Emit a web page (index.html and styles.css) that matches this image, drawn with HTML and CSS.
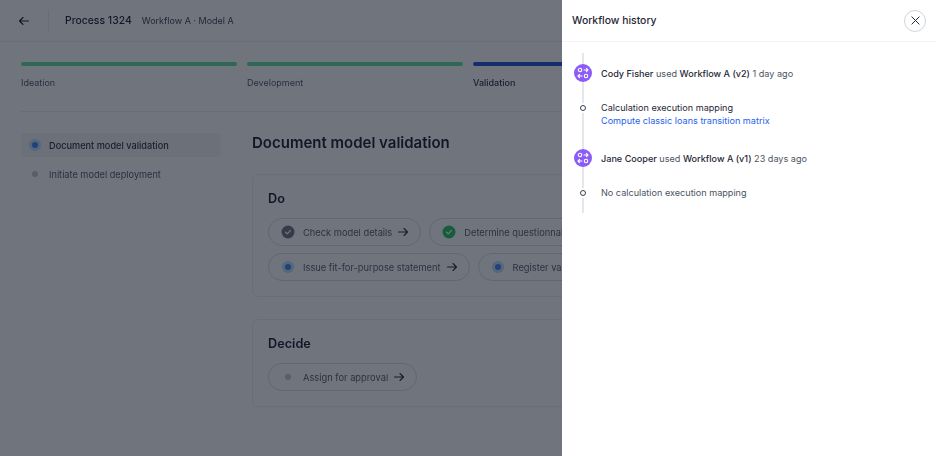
FILE: index.html
```html
<!DOCTYPE html>
<html lang="en">
<head>
<meta charset="utf-8">
<title>Process 1324</title>
<link rel="stylesheet" href="styles.css">
</head>
<body>
<div class="app">
  <div class="page">
    <header class="topbar">
      <button class="back" aria-label="Back">
        <svg width="12" height="12" viewBox="0 0 12 12" fill="none" stroke="currentColor" stroke-width="1.1" stroke-linecap="round" stroke-linejoin="round"><path d="M10.5 6H1.5M5 2.5 1.5 6 5 9.5"/></svg>
      </button>
      <span class="vr"></span>
      <span class="title">Process 1324</span>
      <span class="crumb">Workflow A · Model A</span>
    </header>
    <div class="steps">
      <div class="step"><div class="bar done"></div><span class="step-label">Ideation</span></div>
      <div class="step"><div class="bar done"></div><span class="step-label">Development</span></div>
      <div class="step"><div class="bar current"></div><span class="step-label strong">Validation</span></div>
    </div>
    <div class="columns">
      <nav class="side">
        <a class="side-item active"><span class="status"><i class="halo"></i></span>Document model validation</a>
        <a class="side-item"><span class="status"><i class="pending"></i></span>Initiate model deployment</a>
      </nav>
      <main class="content">
        <h1>Document model validation</h1>
        <section class="card do">
          <h2>Do</h2>
          <div class="chips">
            <div class="chip-row">
              <a class="chip"><svg class="tick" viewBox="0 0 14 14"><circle cx="7" cy="7" r="6.5" fill="#6b7280"/><path d="M4.6 7.2 6.3 8.8 9.4 5.5" fill="none" stroke="#fff" stroke-width="1.2" stroke-linecap="round" stroke-linejoin="round"/></svg>Check model details<svg class="arrow" viewBox="0 0 12 12" fill="none" stroke="currentColor" stroke-width="1.1" stroke-linecap="round" stroke-linejoin="round"><path d="M1.5 6h9M7 2.5 10.5 6 7 9.5"/></svg></a>
              <a class="chip"><svg class="tick" viewBox="0 0 14 14"><circle cx="7" cy="7" r="6.5" fill="#22c55e"/><path d="M4.6 7.2 6.3 8.8 9.4 5.5" fill="none" stroke="#fff" stroke-width="1.2" stroke-linecap="round" stroke-linejoin="round"/></svg>Determine questionnaire outcome<svg class="arrow" viewBox="0 0 12 12" fill="none" stroke="currentColor" stroke-width="1.1" stroke-linecap="round" stroke-linejoin="round"><path d="M1.5 6h9M7 2.5 10.5 6 7 9.5"/></svg></a>
            </div>
            <div class="chip-row">
              <a class="chip"><span class="status"><i class="halo"></i></span>Issue fit-for-purpose statement<svg class="arrow" viewBox="0 0 12 12" fill="none" stroke="currentColor" stroke-width="1.1" stroke-linecap="round" stroke-linejoin="round"><path d="M1.5 6h9M7 2.5 10.5 6 7 9.5"/></svg></a>
              <a class="chip"><span class="status"><i class="halo"></i></span>Register validation results<svg class="arrow" viewBox="0 0 12 12" fill="none" stroke="currentColor" stroke-width="1.1" stroke-linecap="round" stroke-linejoin="round"><path d="M1.5 6h9M7 2.5 10.5 6 7 9.5"/></svg></a>
            </div>
          </div>
        </section>
        <section class="card decide">
          <h2>Decide</h2>
          <div class="chips">
            <div class="chip-row">
              <a class="chip"><span class="status"><i class="pending"></i></span>Assign for approval<svg class="arrow" viewBox="0 0 12 12" fill="none" stroke="currentColor" stroke-width="1.1" stroke-linecap="round" stroke-linejoin="round"><path d="M1.5 6h9M7 2.5 10.5 6 7 9.5"/></svg></a>
            </div>
          </div>
        </section>
      </main>
    </div>
  </div>
  <div class="scrim"></div>
  <aside class="drawer">
    <header class="drawer-head">
      <span class="drawer-title">Workflow history</span>
      <button class="close" aria-label="Close">
        <svg width="9" height="9" viewBox="0 0 10 10" fill="none" stroke="currentColor" stroke-width="1.1" stroke-linecap="round"><path d="M1 1l8 8M9 1 1 9"/></svg>
      </button>
    </header>
    <ol class="timeline">
      <li class="event">
        <span class="badge"><svg width="12" height="12" viewBox="0 0 12 12" fill="none" stroke="#fff" stroke-width="1.1" stroke-linecap="round" stroke-linejoin="round"><circle cx="3" cy="3" r="1.7"/><path d="M7 3h4M9.4 1.4 11 3 9.4 4.6"/><circle cx="9" cy="9" r="1.7"/><path d="M5 9H1M2.6 7.4 1 9l1.6 1.6"/></svg></span>
        <p><b>Cody Fisher</b> used <b>Workflow A (v2)</b> 1 day ago</p>
      </li>
      <li class="detail">
        <span class="node"><i></i></span>
        <div><p class="dark">Calculation execution mapping</p><a class="link">Compute classic loans transition matrix</a></div>
      </li>
      <li class="event">
        <span class="badge"><svg width="12" height="12" viewBox="0 0 12 12" fill="none" stroke="#fff" stroke-width="1.1" stroke-linecap="round" stroke-linejoin="round"><circle cx="3" cy="3" r="1.7"/><path d="M7 3h4M9.4 1.4 11 3 9.4 4.6"/><circle cx="9" cy="9" r="1.7"/><path d="M5 9H1M2.6 7.4 1 9l1.6 1.6"/></svg></span>
        <p><b>Jane Cooper</b> used <b>Workflow A (v1)</b> 23 days ago</p>
      </li>
      <li class="detail last">
        <span class="node"><i></i></span>
        <div><p>No calculation execution mapping</p></div>
      </li>
    </ol>
  </aside>
</div>
</body>
</html>
```

FILE: styles.css
```css
* { box-sizing: border-box; }
html, body { margin: 0; height: 100%; }
body {
  font-family: Inter, "Liberation Sans", sans-serif;
  background: #fff;
  color: #111827;
  overflow: hidden;
}
.app {
  position: relative;
  width: 936px;
  height: 456px;
  overflow: hidden;
  filter: blur(0.5px);
}
.page { width: 936px; height: 456px; overflow: hidden; }
.topbar {
  display: flex;
  align-items: center;
  height: 42px;
  border-bottom: 1px solid #eceef1;
  padding-left: 18px;
}
.back {
  display: flex;
  width: 12px;
  height: 12px;
  padding: 0;
  border: 0;
  background: none;
  color: #111827;
}
.vr { width: 1px; height: 22px; background: #eceef1; margin: 0 16px 0 18px; }
.title { font-size: 10.4px; font-weight: 500; color: #111827; }
.crumb { font-size: 9px; color: #374151; margin-left: 10px; }
.steps {
  display: flex;
  gap: 10px;
  margin: 0 0 0 21px;
  width: 915px;
  height: 70px;
  padding-top: 20px;
  border-bottom: 1px solid #eceef1;
}
.step { width: 216px; flex: none; }
.bar { height: 4px; border-radius: 2px; }
.bar.done { background: #5fe0a0; }
.bar.current { background: #1d4ed8; }
.step-label { display: block; margin-top: 11px; font-size: 9px; line-height: 12px; color: #4b5563; }
.step-label.strong { color: #1f2937; font-weight: 500; }
.columns { display: flex; padding: 21px 0 0 21px; }
.side { width: 200px; flex: none; margin-right: 31px; display: flex; flex-direction: column; gap: 5px; }
.side-item {
  display: flex;
  align-items: center;
  height: 24px;
  padding-left: 6px;
  gap: 6px;
  font-size: 9.2px;
  color: #4b5563;
  border-radius: 4px;
}
.side-item.active { background: #f3f4f6; color: #1f2937; font-weight: 500; }
.status { width: 16px; height: 16px; flex: none; display: flex; align-items: center; justify-content: center; }
.halo { width: 12px; height: 12px; border-radius: 50%; background: #bfdbfe; display: flex; align-items: center; justify-content: center; }
.halo::after { content: ""; width: 6px; height: 6px; border-radius: 50%; background: #3b82f6; }
.pending { width: 6px; height: 6px; border-radius: 50%; background: #c4c8cf; }
.content { width: 660px; flex: none; }
h1 { margin: 0; font-size: 15px; line-height: 20px; font-weight: 600; color: #111827; }
.card {
  border: 1px solid #eceef1;
  border-radius: 6px;
  padding: 16px 15px;
  margin-top: 21px;
}
.card.do { margin-top: 21px; height: 123px; }
.card.decide { margin-top: 22px; height: 88px; }
h2 { margin: 0; font-size: 12.7px; line-height: 16px; font-weight: 600; color: #111827; }
.chips { display: flex; flex-direction: column; gap: 7px; margin-top: 11px; }
.chip-row { display: flex; gap: 8px; }
.chip {
  display: flex;
  align-items: center;
  height: 28px;
  padding: 0 11px 0 12px;
  border: 1px solid #d9dce1;
  border-radius: 14px;
  font-size: 9.3px;
  color: #525a68;
  white-space: nowrap;
}
.chip .status { margin-right: 8px; width: 14px; }
.tick { width: 14px; height: 14px; margin-right: 8px; flex: none; }
.arrow { width: 12px; height: 12px; margin-left: 5px; flex: none; color: #1f2937; }
.scrim { position: absolute; inset: 0; background: rgba(17, 24, 39, 0.6); }
.drawer {
  position: absolute;
  top: 0;
  right: 0;
  bottom: 0;
  width: 374px;
  background: #fff;
}
.drawer-head {
  display: flex;
  align-items: center;
  justify-content: space-between;
  height: 42px;
  padding: 0 10px;
  border-bottom: 1px solid #f3f4f6;
}
.drawer-title { font-size: 10.4px; font-weight: 500; color: #1f2937; }
.close {
  display: flex;
  align-items: center;
  justify-content: center;
  width: 22px;
  height: 22px;
  padding: 0;
  border: 1px solid #d1d5db;
  border-radius: 50%;
  background: #fff;
  color: #1f2937;
}
.timeline {
  position: relative;
  list-style: none;
  margin: 11px 0 0 12px;
  padding: 11px 0 14px;
  display: flex;
  flex-direction: column;
  gap: 19px;
  width: 340px;
}
.timeline::before {
  content: "";
  position: absolute;
  left: 8px;
  top: 0;
  bottom: 0;
  width: 2px;
  background: #e5e7eb;
}
.event, .detail { position: relative; display: flex; gap: 9px; font-size: 9.1px; line-height: 13px; color: #4b5563; }
.event { align-items: center; height: 18px; }
.detail { margin-bottom: 3px; }
.detail.last { margin-bottom: 0; }
p { margin: 0; }
b { font-weight: 500; color: #1f2937; }
.badge { width: 18px; height: 18px; border-radius: 50%; background: #8b5cf6; display: flex; align-items: center; justify-content: center; flex: none; }
.node { width: 18px; height: 13px; flex: none; display: flex; align-items: center; justify-content: center; }
.node i { width: 6px; height: 6px; border-radius: 50%; background: #fff; border: 1px solid #374151; box-shadow: 0 0 0 2px #fff; }
.dark { color: #1f2937; }
.link { display: block; color: #2563eb; }
```
